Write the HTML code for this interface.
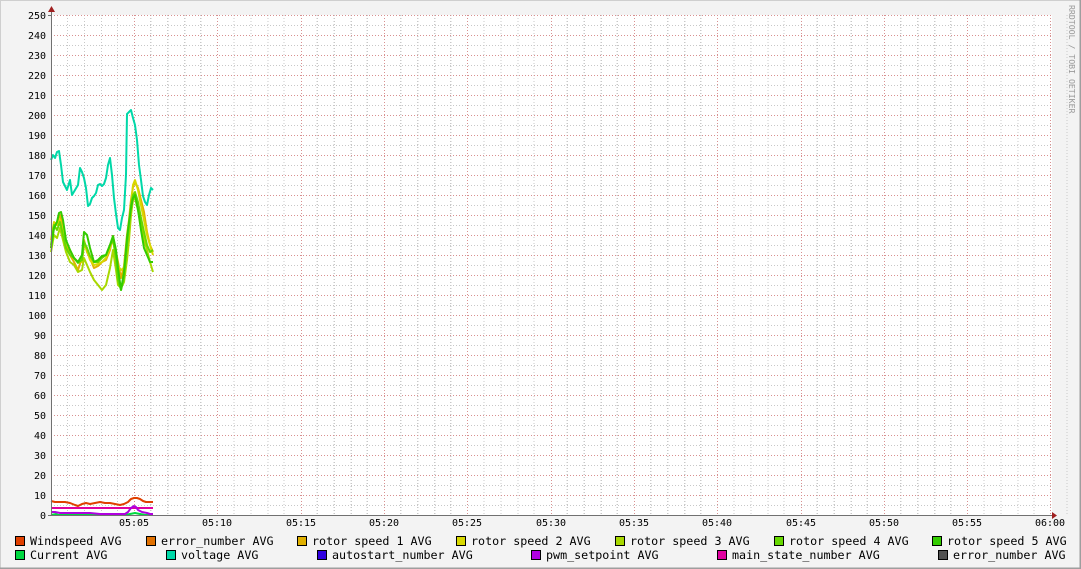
<!DOCTYPE html>
<html><head><meta charset="utf-8"><style>
html,body{margin:0;padding:0;background:#f3f3f3}
svg{display:block}
text{font-family:"DejaVu Sans Mono","Liberation Mono",monospace}
</style></head><body>
<svg width="1081" height="569" viewBox="0 0 1081 569" xmlns="http://www.w3.org/2000/svg">
<rect x="0" y="0" width="1081" height="569" fill="#f3f3f3"/>
<path d="M0.5 568V0.5H1080" stroke="#cfcfcf" fill="none"/>
<path d="M1080.5 0V568.5H0" stroke="#9e9e9e" stroke-width="2" fill="none"/>
<rect x="51" y="15" width="1001" height="500" fill="#fff"/>
<g id="grid" shape-rendering="crispEdges">
<g stroke="#c8c8c8" stroke-dasharray="1,2">
<path d="M51 25.5H1052M51 45.5H1052M51 65.5H1052M51 85.5H1052M51 105.5H1052M51 125.5H1052M51 145.5H1052M51 165.5H1052M51 185.5H1052M51 205.5H1052M51 225.5H1052M51 245.5H1052M51 265.5H1052M51 285.5H1052M51 305.5H1052M51 325.5H1052M51 345.5H1052M51 365.5H1052M51 385.5H1052M51 405.5H1052M51 425.5H1052M51 445.5H1052M51 465.5H1052M51 485.5H1052M51 505.5H1052"/>
<path id="vmin" d="M67.5 15V515M84.5 15V515M101.5 15V515M117.5 15V515M150.5 15V515M167.5 15V515M184.5 15V515M200.5 15V515"/>
<use href="#vmin" x="83.33"/><use href="#vmin" x="166.67"/><use href="#vmin" x="250"/><use href="#vmin" x="333.33"/><use href="#vmin" x="416.67"/><use href="#vmin" x="500"/><use href="#vmin" x="583.33"/><use href="#vmin" x="666.67"/><use href="#vmin" x="750"/><use href="#vmin" x="833.33"/><use href="#vmin" x="916.67"/>
</g>
<g stroke="#d89090" stroke-dasharray="1,2">
<path d="M51 15.5H1052M51 35.5H1052M51 55.5H1052M51 75.5H1052M51 95.5H1052M51 115.5H1052M51 135.5H1052M51 155.5H1052M51 175.5H1052M51 195.5H1052M51 215.5H1052M51 235.5H1052M51 255.5H1052M51 275.5H1052M51 295.5H1052M51 315.5H1052M51 335.5H1052M51 355.5H1052M51 375.5H1052M51 395.5H1052M51 415.5H1052M51 435.5H1052M51 455.5H1052M51 475.5H1052M51 495.5H1052"/>
<path d="M134.5 15V515M217.5 15V515M301.5 15V515M384.5 15V515M467.5 15V515M551.5 15V515M634.5 15V515M717.5 15V515M801.5 15V515M884.5 15V515M967.5 15V515M1050.5 15V515"/>
</g>
</g>
<g fill="none" stroke-width="2" stroke-linejoin="round">
<polyline stroke="#00d8a8" points="51,160 53,155 55,158 57,152 59,151 61,165 63,182 65,186 67,190 70,180 72,195 75,190 78,185 80,168 82,172 84,178 86,188 88,206 90,204 92,198 94,196 96,193 98,185 100,184 102,186 104,184 106,178 108,165 110,158 112,175 114,198 116,214 118,228 120,230 122,218 124,210 126,175 127,114 129,112 131,110 133,118 135,125 137,140 139,165 141,180 143,196 145,202 147,205 149,195 151,188 153,190"/>
<polyline stroke="#e0b000" points="51,248 54,228 57,222 60,215 63,228 66,245 70,255 74,262 78,270 82,258 84,240 87,252 90,258 94,268 98,266 102,262 106,260 110,250 113,236 116,252 118,262 121,278 124,266 127,235 129,220 131,200 133,187 135,182 138,188 141,200 144,212 147,232 150,245 153,252"/>
<polyline stroke="#d8d800" points="51,240 54,222 57,225 60,220 63,230 66,242 70,250 74,258 78,262 82,262 84,245 87,250 90,260 94,265 98,264 102,262 106,258 110,248 113,238 116,255 118,266 121,270 124,268 127,240 129,225 131,205 133,185 135,180 138,190 141,205 144,220 147,235 150,245 153,255"/>
<polyline stroke="#a8d800" points="51,252 54,235 57,238 60,228 63,240 66,252 70,262 74,265 78,272 82,270 84,258 87,265 90,272 94,280 98,285 102,290 106,285 110,268 113,250 116,270 118,285 121,288 124,282 127,260 129,240 131,215 133,200 135,198 138,210 141,225 144,240 147,250 150,262 153,272"/>
<polyline stroke="#66d800" points="51,245 54,225 57,230 60,222 63,235 66,248 70,255 74,258 78,263 82,260 84,242 87,248 90,256 94,262 98,262 102,258 106,255 110,245 113,240 116,258 118,280 121,290 124,278 127,245 129,225 131,205 133,195 135,192 138,202 141,218 144,232 147,245 150,252 153,250"/>
<polyline stroke="#33cc00" points="51,248 54,228 57,222 59,213 61,212 63,220 66,240 70,250 74,258 78,262 82,255 84,232 87,235 90,248 94,262 98,260 102,256 106,255 110,245 113,236 116,250 118,268 121,290 124,272 127,238 129,222 131,208 133,198 135,195 138,210 141,230 144,248 147,255 150,262 153,262"/>
<polyline stroke="#e04000" points="51,501 55,502 60,502 65,502 70,503 75,505 78,506 82,504 86,503 90,504 95,503 100,502 105,503 110,503 115,504 120,505 124,504 128,502 131,499 134,498 137,498 140,499 143,501 146,502 150,502 153,502"/>
<polyline stroke="#e000a0" points="51,508 153,508"/>
<polyline stroke="#00d840" points="51,515 56,514 58,515 125,515 130,514 135,513 140,514 145,515 153,515"/>
<polyline stroke="#b000e0" points="51,512 55,512 60,513 70,513 80,513 90,513 100,514 110,514 120,514 125,514 128,512 131,508 134,506 136,507 138,510 142,512 147,513 150,514 153,514"/>
</g>
<path d="M51.5 8V515M51 515.5H1053" stroke="#707070" shape-rendering="crispEdges"/>
<path d="M48 12L51.5 6L55 12Z" fill="#a02020"/>
<path d="M1052 512L1057 515.5L1052 519Z" fill="#a02020"/>
<g stroke="#707070" shape-rendering="crispEdges"><path d="M48 15.5H51M48 515.5H51"/></g>
<g font-size="10" fill="#000" text-anchor="end">
<text x="46" y="19">250</text><text x="46" y="39">240</text><text x="46" y="59">230</text><text x="46" y="79">220</text><text x="46" y="99">210</text><text x="46" y="119">200</text><text x="46" y="139">190</text><text x="46" y="159">180</text><text x="46" y="179">170</text><text x="46" y="199">160</text><text x="46" y="219">150</text><text x="46" y="239">140</text><text x="46" y="259">130</text><text x="46" y="279">120</text><text x="46" y="299">110</text><text x="46" y="319">100</text><text x="46" y="339">90</text><text x="46" y="359">80</text><text x="46" y="379">70</text><text x="46" y="399">60</text><text x="46" y="419">50</text><text x="46" y="439">40</text><text x="46" y="459">30</text><text x="46" y="479">20</text><text x="46" y="499">10</text><text x="46" y="519">0</text>
</g>
<g font-size="10" fill="#000" text-anchor="middle">
<text x="134" y="526">05:05</text><text x="217" y="526">05:10</text><text x="301" y="526">05:15</text><text x="384" y="526">05:20</text><text x="467" y="526">05:25</text><text x="551" y="526">05:30</text><text x="634" y="526">05:35</text><text x="717" y="526">05:40</text><text x="801" y="526">05:45</text><text x="884" y="526">05:50</text><text x="967" y="526">05:55</text><text x="1050" y="526">06:00</text>
</g>
<text transform="translate(1069,5) rotate(90)" font-size="8.2" fill="#999" letter-spacing="0">RRDTOOL / TOBI OETIKER</text>
<g stroke="#000" stroke-width="1" shape-rendering="crispEdges">
<rect x="15.5" y="536.5" width="9" height="9" fill="#e04000"/>
<rect x="146.5" y="536.5" width="9" height="9" fill="#e07000"/>
<rect x="297.5" y="536.5" width="9" height="9" fill="#e0b000"/>
<rect x="456.5" y="536.5" width="9" height="9" fill="#d8d800"/>
<rect x="615.5" y="536.5" width="9" height="9" fill="#a8d800"/>
<rect x="774.5" y="536.5" width="9" height="9" fill="#66d800"/>
<rect x="932.5" y="536.5" width="9" height="9" fill="#33cc00"/>
<rect x="15.5" y="550.5" width="9" height="9" fill="#00d840"/>
<rect x="166.5" y="550.5" width="9" height="9" fill="#00d8a8"/>
<rect x="317.5" y="550.5" width="9" height="9" fill="#3000e0"/>
<rect x="531.5" y="550.5" width="9" height="9" fill="#b000e0"/>
<rect x="717.5" y="550.5" width="9" height="9" fill="#e000a0"/>
<rect x="938.5" y="550.5" width="9" height="9" fill="#505050"/>
</g>
<g font-size="11.7" fill="#000">
<text x="30" y="545">Windspeed AVG</text>
<text x="161" y="545">error_number AVG</text>
<text x="312" y="545">rotor speed 1 AVG</text>
<text x="471" y="545">rotor speed 2 AVG</text>
<text x="630" y="545">rotor speed 3 AVG</text>
<text x="789" y="545">rotor speed 4 AVG</text>
<text x="947" y="545">rotor speed 5 AVG</text>
<text x="30" y="559">Current AVG</text>
<text x="181" y="559">voltage AVG</text>
<text x="332" y="559">autostart_number AVG</text>
<text x="546" y="559">pwm_setpoint AVG</text>
<text x="732" y="559">main_state_number AVG</text>
<text x="953" y="559">error_number AVG</text>
</g>
</svg>
</body></html>
